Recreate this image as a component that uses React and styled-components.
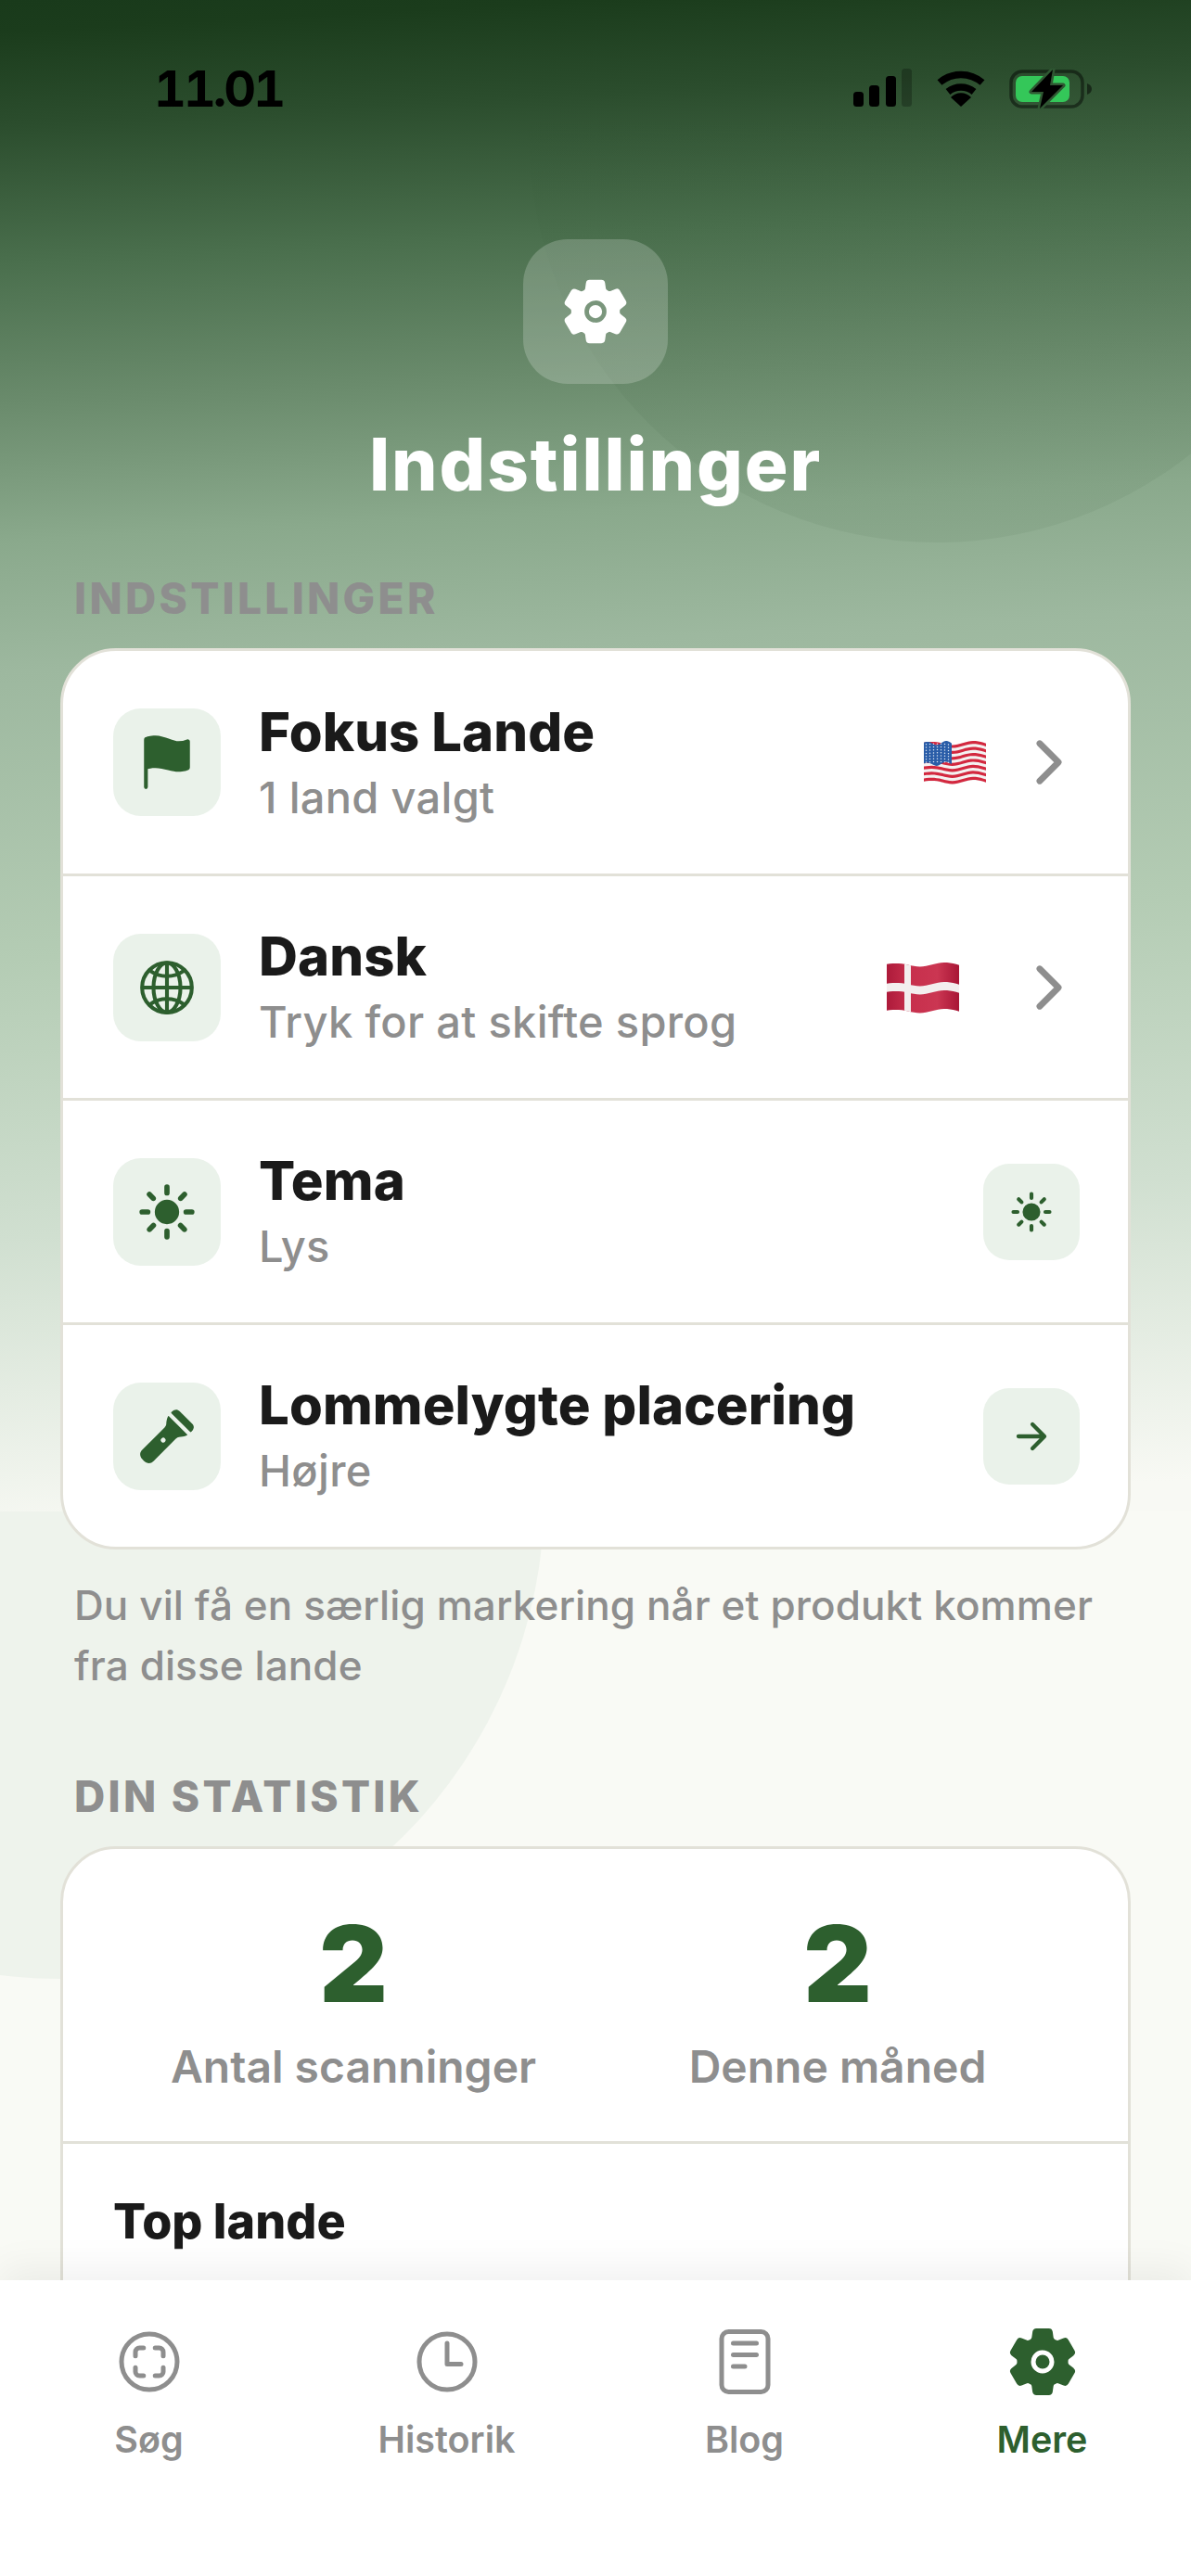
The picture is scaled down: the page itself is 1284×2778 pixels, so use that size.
import React from 'react';
import styled, { createGlobalStyle } from 'styled-components';
import {
  IoSettings,
  IoFlag,
  IoGlobeOutline,
  IoSunny,
  IoFlashlight,
  IoArrowForward,
  IoChevronForward,
  IoScanCircleOutline,
  IoTimeOutline,
  IoReaderOutline,
} from 'react-icons/io5';

const GREEN = '#2d5f2e';
const GREY = '#8e8e8e';
const LINE = '#e2e1d8';

const GlobalStyle = createGlobalStyle`
  html, body { margin: 0; padding: 0; background: #f9faf5; }
  body { font-family: Inter, "Noto Sans", sans-serif; }
`;

const Screen = styled.div`
  position: relative;
  width: 1284px;
  height: 2778px;
  overflow: hidden;
  display: flex;
  flex-direction: column;
  background: #f9faf5;
`;

const LowerBlob = styled.div`
  position: absolute;
  left: -457px;
  top: 1090px;
  width: 1044px;
  height: 1044px;
  border-radius: 50%;
  background: #eef3ec;
`;

const Backdrop = styled.div`
  position: absolute;
  left: 0;
  top: 0;
  width: 100%;
  height: 1630px;
  overflow: hidden;
  background: linear-gradient(
    177deg,
    #193a1b 0%,
    #1b3c1c 2%,
    #2b4d2d 7.9%,
    #4a6f4d 16.7%,
    #6a8b6c 25.6%,
    #8aa98c 34.4%,
    #9db89f 42.7%,
    #b4ccb4 61%,
    #d0dfd0 78.7%,
    #f8f9f4 98%
  );
`;

const UpperBlob = styled.div`
  position: absolute;
  left: 570px;
  top: -295px;
  width: 880px;
  height: 880px;
  border-radius: 50%;
  background: linear-gradient(rgba(25, 60, 28, 0) 40%, rgba(25, 60, 28, 0.06) 90%);
`;

const Content = styled.main`
  position: relative;
  flex: 1;
  min-height: 0;
  overflow: hidden;
  padding: 0 65px;
`;

const StatusBar = styled.div`
  height: 148px;
  display: flex;
  justify-content: space-between;
  align-items: flex-start;
  padding: 64px 41px 0 101px;
  box-sizing: border-box;
`;

const Time = styled.div`
  font-size: 54px;
  line-height: 64px;
  font-weight: 700;
  font-variant-numeric: tabular-nums;
  color: #000;
  letter-spacing: -3px;
`;

const StatusIcons = styled.div`
  display: flex;
  align-items: flex-start;
  gap: 24px;
  padding-top: 10px;
`;

const Header = styled.header`
  display: flex;
  flex-direction: column;
  align-items: center;
  padding-top: 110px;
`;

const HeaderIcon = styled.div`
  width: 156px;
  height: 156px;
  border-radius: 48px;
  background: rgba(255, 255, 255, 0.2);
  display: flex;
  align-items: center;
  justify-content: center;
  color: #fff;
`;

const Title = styled.h1`
  margin: 37px 0 0;
  font-size: 78px;
  line-height: 100px;
  font-weight: 800;
  letter-spacing: 1.9px;
  color: #fff;
`;

const SectionLabel = styled.div`
  margin: ${(p) => p.$top}px 0 0 15px;
  font-size: 46px;
  line-height: 54px;
  font-weight: 800;
  letter-spacing: 3.3px;
  color: ${GREY};
`;

const Card = styled.section`
  margin-top: ${(p) => p.$top}px;
  background: #fff;
  border: 3px solid ${LINE};
  border-radius: 60px;
  overflow: hidden;
`;

const Row = styled.div`
  height: 240px;
  box-sizing: border-box;
  display: flex;
  align-items: center;
  padding: 0 52px 0 54px;
  & + & {
    height: 242px;
    border-top: 3px solid ${LINE};
  }
`;

const IconTile = styled.div`
  flex: none;
  width: ${(p) => (p.$small ? 104 : 116)}px;
  height: ${(p) => (p.$small ? 104 : 116)}px;
  border-radius: ${(p) => (p.$small ? 28 : 30)}px;
  background: #eaf2ea;
  color: ${GREEN};
  display: flex;
  align-items: center;
  justify-content: center;
`;

const RowText = styled.div`
  flex: 1;
  margin-left: 41px;
  padding-top: 3px;
`;

const RowTitle = styled.div`
  font-size: 58px;
  line-height: 68px;
  font-weight: 800;
  letter-spacing: 0.1px;
  color: #1a1a1a;
`;

const RowSub = styled.div`
  margin-top: 4px;
  font-size: 47px;
  line-height: 66px;
  font-weight: 500;
  letter-spacing: 0.3px;
  color: ${GREY};
`;

const Chevron = styled(IoChevronForward)`
  flex: none;
  margin: 0 -3px 0 32px;
  color: ${GREY};
`;

const FlagSvg = styled.svg`
  flex: none;
  margin-right: ${(p) => p.$gap}px;
`;

const Note = styled.p`
  margin: 28px 0 0 15px;
  font-size: 44px;
  line-height: 65px;
  font-weight: 500;
  letter-spacing: 0.1px;
  color: ${GREY};
`;

const Stats = styled.div`
  display: grid;
  grid-template-columns: 1fr 1fr;
  padding: 0 52px;
  height: 318px;
  box-sizing: border-box;
  border-bottom: 3px solid ${LINE};
`;

const Stat = styled.div`
  display: flex;
  flex-direction: column;
  align-items: center;
`;

const StatValue = styled.div`
  margin-top: 62px;
  font-size: 114px;
  line-height: 124px;
  font-weight: 900;
  color: ${GREEN};
`;

const StatLabel = styled.div`
  margin-top: 19px;
  font-size: 48px;
  line-height: 60px;
  font-weight: 600;
  color: ${GREY};
`;

const TopTitle = styled.div`
  margin: 52px 0 200px 54px;
  font-size: 52px;
  line-height: 64px;
  font-weight: 800;
  color: #1a1a1a;
`;

const TabBar = styled.nav`
  position: relative;
  flex: none;
  height: 319px;
  box-sizing: border-box;
  background: #fff;
  box-shadow: 0 -12px 40px rgba(0, 0, 0, 0.06);
  display: grid;
  grid-template-columns: repeat(4, 1fr);
  padding-top: 48px;
`;

const Tab = styled.div`
  display: flex;
  flex-direction: column;
  align-items: center;
  color: ${(p) => (p.$active ? GREEN : GREY)};
`;

const TabIcon = styled.div`
  height: 80px;
  display: flex;
  align-items: center;
  justify-content: center;
`;

const TabLabel = styled.div`
  margin-top: 19px;
  font-size: 39.5px;
  line-height: 50px;
  font-weight: 600;
`;

const SignalIcon = () => (
  <svg width="64" height="42" viewBox="0 0 64 42">
    <rect x="0" y="25" width="11" height="16" rx="3.5" fill="#000" />
    <rect x="17" y="18" width="11" height="23" rx="3.5" fill="#000" />
    <rect x="35" y="8" width="11" height="33" rx="3.5" fill="#000" />
    <rect x="52" y="0" width="11" height="41" rx="3.5" fill="#000" opacity="0.25" />
  </svg>
);

const WifiIcon = () => (
  <svg width="56" height="42" viewBox="0 0 56 42">
    <path d="M5 15 A35 35 0 0 1 51 15" fill="none" stroke="#000" strokeWidth="7.5" />
    <path d="M14 25 A22 22 0 0 1 42 25" fill="none" stroke="#000" strokeWidth="7.5" />
    <path d="M28 41 L17 31 A15 15 0 0 1 39 31 Z" fill="#000" />
  </svg>
);

const BatteryIcon = () => (
  <svg width="90" height="44" viewBox="0 0 90 44">
    <rect x="2" y="3" width="77" height="38" rx="12" fill="none" stroke="#000" strokeOpacity="0.45" strokeWidth="3.5" />
    <rect x="7" y="8" width="58" height="28" rx="7" fill="#34c759" />
    <path d="M84 16 C87 17 89 19 89 22 C89 25 87 27 84 28 Z" fill="#000" opacity="0.5" />
    <path
      d="M47 1 L24 25 L37 25 L33 43 L58 18 L44 18 Z"
      fill="#000"
      stroke="#2f5732"
      strokeWidth="5"
      paintOrder="stroke"
      strokeLinejoin="round"
    />
  </svg>
);

// vertical offset of the cloth at t (0..1) along the flag, gives the waving edge
const wave = (t) => {
  const damp = t < 0.45 ? 0.4 + (0.6 * t) / 0.45 : 1;
  return 2.2 + 2.2 * Math.cos((2 * Math.PI * (t - 0.45)) / 0.7) * damp;
};

const band = (w, top, bottom) => {
  const steps = [];
  for (let i = 0; i <= 24; i++) steps.push(i / 24);
  const upper = steps.map((t) => `${(t * w).toFixed(1)} ${(top + wave(t)).toFixed(2)}`);
  const lower = steps
    .slice()
    .reverse()
    .map((t) => `${(t * w).toFixed(1)} ${(bottom + wave(t)).toFixed(2)}`);
  return `M${upper.join(' L')} L${lower.join(' L')} Z`;
};

const UsFlag = () => {
  const stripeH = 42 / 13;
  const stars = [];
  for (let r = 0; r < 7; r++) {
    for (let c = 0; c < 7; c++) {
      stars.push(<circle key={`${r}-${c}`} cx={2.5 + c * 4} cy={wave(c / 24) + 2.2 + r * 3.2} r="0.75" fill="#dfe9f5" />);
    }
  }
  return (
    <FlagSvg $gap={0} width="67" height="47" viewBox="0 0 67 47">
      <path d={band(67, 0, 42.5)} fill="#f4f1f1" />
      {Array.from({ length: 7 }, (_, i) => (
        <path key={i} d={band(67, i * 2 * stripeH, i * 2 * stripeH + stripeH)} fill="#d3283f" />
      ))}
      <path d={band(30, 0, 22.6)} fill="#2a5da8" />
      {stars}
    </FlagSvg>
  );
};

const DkFlag = () => (
  <FlagSvg $gap={29} width="78" height="56" viewBox="0 0 78 56">
    <defs>
      <linearGradient id="dk" x1="0" x2="1" y1="0" y2="0">
        <stop offset="0" stopColor="#ad1a3a" />
        <stop offset="0.3" stopColor="#c72f4c" />
        <stop offset="0.7" stopColor="#cb3652" />
        <stop offset="1" stopColor="#a81636" />
      </linearGradient>
      <clipPath id="dkCloth">
        <path d={band(78, 1, 51)} />
      </clipPath>
    </defs>
    <path d={band(78, 1, 51)} fill="url(#dk)" />
    <g clipPath="url(#dkCloth)">
      <rect x="19" y="0" width="7" height="56" fill="#f3eeee" />
      <path d={band(78, 22, 31)} fill="#f3eeee" />
    </g>
  </FlagSvg>
);

const rows = [
  {
    title: 'Fokus Lande',
    sub: '1 land valgt',
    icon: <IoFlag size={66} />,
    end: (
      <>
        <UsFlag />
        <Chevron size={72} />
      </>
    ),
  },
  {
    title: 'Dansk',
    sub: 'Tryk for at skifte sprog',
    icon: <IoGlobeOutline size={66} />,
    end: (
      <>
        <DkFlag />
        <Chevron size={72} />
      </>
    ),
  },
  {
    title: 'Tema',
    sub: 'Lys',
    icon: <IoSunny size={66} />,
    end: (
      <IconTile $small>
        <IoSunny size={48} />
      </IconTile>
    ),
  },
  {
    title: 'Lommelygte placering',
    sub: 'Højre',
    icon: <IoFlashlight size={66} />,
    end: (
      <IconTile $small>
        <IoArrowForward size={46} />
      </IconTile>
    ),
  },
];

const tabs = [
  { label: 'Søg', icon: <IoScanCircleOutline size={80} /> },
  { label: 'Historik', icon: <IoTimeOutline size={80} /> },
  { label: 'Blog', icon: <IoReaderOutline size={80} /> },
  { label: 'Mere', icon: <IoSettings size={80} />, active: true },
];

export default function App() {
  return (
    <>
      <GlobalStyle />
      <Screen>
        <LowerBlob />
        <Backdrop>
          <UpperBlob />
        </Backdrop>
        <Content>
          <StatusBar>
            <Time>11.01</Time>
            <StatusIcons>
              <SignalIcon />
              <WifiIcon />
              <BatteryIcon />
            </StatusIcons>
          </StatusBar>
          <Header>
            <HeaderIcon>
              <IoSettings size={76} />
            </HeaderIcon>
            <Title>Indstillinger</Title>
          </Header>
          <SectionLabel $top={67}>INDSTILLINGER</SectionLabel>
          <Card $top={27}>
            {rows.map((row) => (
              <Row key={row.title}>
                <IconTile>{row.icon}</IconTile>
                <RowText>
                  <RowTitle>{row.title}</RowTitle>
                  <RowSub>{row.sub}</RowSub>
                </RowText>
                {row.end}
              </Row>
            ))}
          </Card>
          <Note>
            Du vil få en særlig markering når et produkt kommer
            <br />
            fra disse lande
          </Note>
          <SectionLabel $top={81}>DIN STATISTIK</SectionLabel>
          <Card $top={27}>
            <Stats>
              <Stat>
                <StatValue>2</StatValue>
                <StatLabel>Antal scanninger</StatLabel>
              </Stat>
              <Stat>
                <StatValue>2</StatValue>
                <StatLabel>Denne måned</StatLabel>
              </Stat>
            </Stats>
            <TopTitle>Top lande</TopTitle>
          </Card>
        </Content>
        <TabBar>
          {tabs.map((tab) => (
            <Tab key={tab.label} $active={tab.active}>
              <TabIcon>{tab.icon}</TabIcon>
              <TabLabel>{tab.label}</TabLabel>
            </Tab>
          ))}
        </TabBar>
      </Screen>
    </>
  );
}
